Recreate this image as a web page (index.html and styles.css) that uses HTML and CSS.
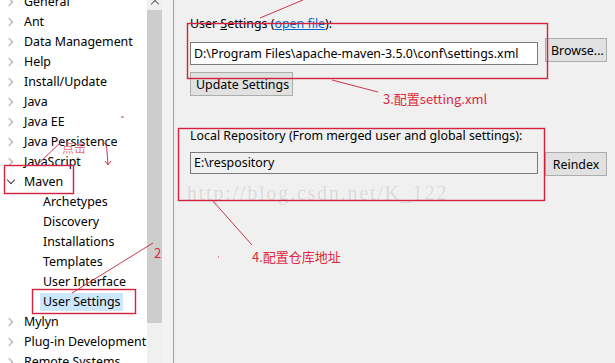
FILE: index.html
```html
<!DOCTYPE html>
<html lang="zh">
<head>
    <meta charset="UTF-8">
    <title>Preferences - Maven User Settings</title>
    <link rel="stylesheet" href="styles.css">
</head>
<body>

<div class="window">
    <div class="tree-pane">
        <ul class="tree">
            <li class="node"><span class="chev"></span>General</li>
            <li class="node"><span class="chev"></span>Ant</li>
            <li class="node"><span class="chev"></span>Data Management</li>
            <li class="node"><span class="chev"></span>Help</li>
            <li class="node"><span class="chev"></span>Install/Update</li>
            <li class="node"><span class="chev"></span>Java</li>
            <li class="node"><span class="chev"></span>Java EE</li>
            <li class="node"><span class="chev"></span>Java Persistence</li>
            <li class="node"><span class="chev"></span>JavaScript</li>
            <li class="node open"><span class="chev"></span>Maven</li>
            <li class="leaf">Archetypes</li>
            <li class="leaf">Discovery</li>
            <li class="leaf">Installations</li>
            <li class="leaf">Templates</li>
            <li class="leaf">User Interface</li>
            <li class="leaf"><span class="selected">User Settings</span></li>
            <li class="node"><span class="chev"></span>Mylyn</li>
            <li class="node"><span class="chev"></span>Plug-in Development</li>
            <li class="node"><span class="chev"></span>Remote Systems</li>
        </ul>
    </div>
    <div class="scrollbar">
        <div class="arrow"></div>
        <div class="thumb"></div>
    </div>
    <div class="gutter"></div>

    <div class="settings">
        <div class="label">User <u>S</u>ettings (<a href="#">open file</a>):</div>
        <div class="row">
            <div class="field">D:\Program Files\apache-maven-3.5.0\conf\settings.xml</div>
            <button class="btn btn-up">Browse...</button>
        </div>
        <button class="btn update">Update Settings</button>

        <div class="label repo">Local Repository (From merged user and global settings):</div>
        <div class="row">
            <div class="field readonly">E:\respository</div>
            <button class="btn">Reindex</button>
        </div>
        <div class="watermark">http://blog.csdn.net/K_122</div>
    </div>
</div>

<!-- hand-drawn annotations on top of the screenshot -->
<svg class="marks" width="615" height="363" viewBox="0 0 615 363">
    <g fill="none" stroke="#d3223c" stroke-width="1.4">
        <rect x="4.5" y="165.5" width="69" height="28"/>
        <rect x="32.5" y="289.5" width="103" height="24"/>
        <rect x="187.5" y="23.5" width="360" height="55"/>
        <rect x="178.5" y="128.5" width="366" height="72"/>
    </g>
    <g fill="none" stroke="#c42038" stroke-width="0.9">
        <line x1="36" y1="166" x2="62" y2="141"/>
        <path d="M103 142 q4 2 4 10 l1 12 M105 161 l3 4 l3 -4"/>
        <line x1="72" y1="293" x2="153" y2="243"/>
        <line x1="303" y1="0" x2="260" y2="18"/>
        <line x1="332" y1="80" x2="378" y2="92"/>
        <line x1="212" y1="200" x2="252" y2="245"/>
        <line x1="121" y1="117" x2="124" y2="117"/>
        <line x1="218" y1="257" x2="219" y2="257"/>
    </g>
</svg>
<span class="note click">点击</span>
<span class="note two">2</span>
<span class="note three">3.配置setting.xml</span>
<span class="note four">4.配置仓库地址</span>

</body>
</html>
```

FILE: styles.css
```css
html, body {
    margin: 0;
    width: 615px;
    height: 363px;
    overflow: hidden;
}
body {
    position: relative;
    font-family: "Noto Sans", "Noto Sans CJK SC", sans-serif;
    font-size: 12.4px;
    color: #000;
    background-color: #f0f0f0;
}
.window {
    display: flex;
    height: 363px;
}
.tree-pane {
    width: 150px;
    background: white;
    overflow: hidden;
}
.tree {
    list-style: none;
    margin: -8px 0 0 0;
    padding: 0;
}
.tree li {
    height: 20px;
    line-height: 20px;
    white-space: nowrap;
}
.node {
    display: flex;
    align-items: center;
}
.chev {
    flex-shrink: 0;
    width: 24px;
    height: 20px;
    position: relative;
}
.chev::before {
    content: "";
    position: absolute;
    left: 6px;
    top: 7px;
    width: 5px;
    height: 5px;
    border-right: 1.5px solid #a6a6a6;
    border-bottom: 1.5px solid #a6a6a6;
    transform: rotate(-45deg);
}
.open .chev::before {
    left: 8px;
    top: 5px;
    border-color: #404040;
    transform: rotate(45deg);
}
.leaf {
    padding-left: 43px;
}
.selected {
    display: inline-block;
    background: #cce8ff;
    margin-left: -3px;
    padding: 0 3px;
    line-height: 18px;
}
.scrollbar {
    width: 15px;
    background: #f0f0f0;
    display: flex;
    flex-direction: column;
    align-items: center;
}
.arrow {
    width: 5px;
    height: 5px;
    margin-top: 1px;
    border-left: 1.5px solid #606060;
    border-top: 1.5px solid #606060;
    transform: rotate(45deg);
}
.thumb {
    width: 15px;
    height: 313px;
    margin-top: 3px;
    background: #cdcdcd;
}
.gutter {
    width: 11px;
    background: #f3f3f3;
    border-right: 1px solid #a0a0a0;
}
.settings {
    flex: 1;
    padding: 15px 8px 0 16px;
}
.label {
    height: 18px;
    line-height: 18px;
    white-space: nowrap;
}
.label a {
    color: #0066cc;
}
.row {
    display: flex;
    gap: 7px;
    margin-top: 9px;
    align-items: flex-start;
}
.field {
    width: 343px;
    height: 21px;
    line-height: 21px;
    padding-left: 3px;
    border: 1px solid #7a7a7a;
    background: white;
    white-space: nowrap;
    overflow: hidden;
}
.field.readonly {
    background: #f0f0f0;
    height: 20px;
    line-height: 20px;
}
.btn {
    display: block;
    font-family: inherit;
    font-size: 12.4px;
    height: 24px;
    padding: 0 5px;
    border: 1px solid #adadad;
    background: #e1e1e1;
    color: #000;
    white-space: nowrap;
}
.row .btn {
    width: 62px;
}
.btn-up {
    margin-top: -4px;
}
.update {
    margin-top: 7px;
    width: 103px;
}
.repo {
    margin-top: 31px;
}
.repo + .row {
    margin-top: 7px;
}
.watermark {
    margin: 6px 0 0 -3px;
    font-family: "Liberation Serif", serif;
    font-size: 20px;
    letter-spacing: 1.8px;
    color: #dadada;
    text-shadow: 1px 1px 0 #f8f8f8;
}
.marks {
    position: absolute;
    left: 0;
    top: 0;
}
.note {
    position: absolute;
    color: #e0283f;
    font-family: "Noto Sans CJK SC", sans-serif;
    font-size: 13px;
    line-height: 16px;
}
.click {
    left: 62px;
    top: 140px;
    font-size: 12px;
    color: #e8707e;
}
.two {
    left: 154px;
    top: 245px;
}
.three {
    left: 383px;
    top: 91px;
}
.four {
    left: 252px;
    top: 249px;
}
```
